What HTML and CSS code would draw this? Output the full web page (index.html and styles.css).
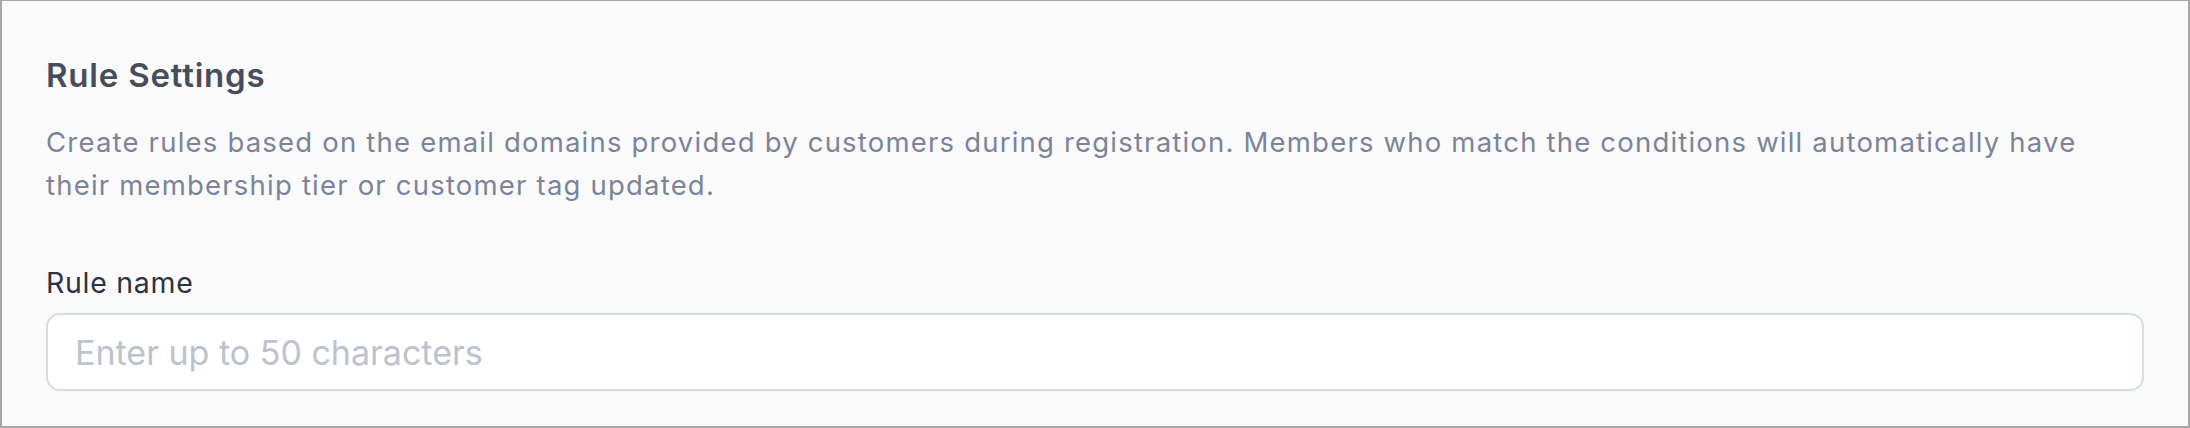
FILE: index.html
```html
<!DOCTYPE html>
<html lang="en">
<head>
<meta charset="utf-8">
<title>Rule Settings</title>
<link rel="stylesheet" href="styles.css">
</head>
<body>
<section class="panel">
  <h2 class="panel-title">Rule Settings</h2>
  <p class="panel-desc">Create rules based on the email domains provided by customers during registration. Members who match the conditions will automatically have their membership tier or customer tag updated.</p>
  <div class="field">
    <label class="field-label" for="rule-name">Rule name</label>
    <input class="field-input" id="rule-name" type="text" placeholder="Enter up to 50 characters">
  </div>
</section>
</body>
</html>
```

FILE: styles.css
```css
* { box-sizing: border-box; }
html, body { margin: 0; padding: 0; background: #fafafa; }
body { font-family: Inter, "Noto Sans", sans-serif; }

.panel {
  width: 2190px;
  height: 428px;
  overflow: hidden;
  background: #fafafa;
  border-style: solid;
  border-color: #a7a7a7;
  border-width: 1px 2px 2px 2px;
  padding: 54px 44px 0 44px;
}

.panel-title {
  margin: 0;
  font-size: 33px;
  line-height: 40px;
  font-weight: 600;
  letter-spacing: 0.8px;
  color: #474d5b;
}

.panel-desc {
  margin: 25.5px 0 0 0;
  font-size: 27.5px;
  line-height: 43.5px;
  letter-spacing: 1.2px;
  color: #7b8499;
}

.field {
  margin-top: 54px;
  display: flex;
  flex-direction: column;
  gap: 9px;
}

.field-label {
  font-size: 28.5px;
  line-height: 42.75px;
  letter-spacing: 0.7px;
  color: #2e3341;
}

.field-input {
  width: 100%;
  height: 78px;
  border: 2px solid #d5dde7;
  border-radius: 14px;
  background: #ffffff;
  padding: 0 27px;
  font-family: Inter, "Noto Sans", sans-serif;
  font-size: 34px;
  color: #2b303c;
  outline: none;
}

.field-input::placeholder {
  color: #bcc2ce;
}
```
